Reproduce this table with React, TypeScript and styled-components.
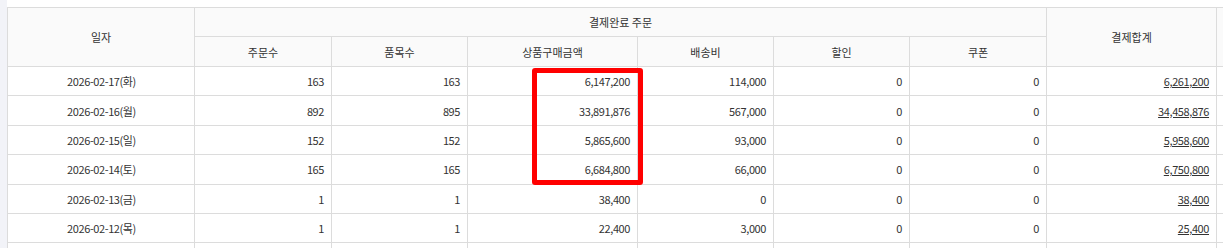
import React from "react";
import styled, { createGlobalStyle } from "styled-components";

const GlobalStyle = createGlobalStyle`
	html, body {
		margin: 0;
		padding: 0;
		background: #ffffff;
		overflow: hidden;
	}
	body {
		font-family: "Noto Sans CJK KR", "Noto Sans", sans-serif;
		font-size: 11px;
		color: #333333;
	}
`;

interface IRow {
	date: string;
	orders: number;
	items: number;
	amount: number;
	shipping: number;
	discount: number;
	coupon: number;
	total: number;
}

const rows: IRow[] = [
	{ date: "2026-02-17(화)", orders: 163, items: 163, amount: 6147200, shipping: 114000, discount: 0, coupon: 0, total: 6261200 },
	{ date: "2026-02-16(월)", orders: 892, items: 895, amount: 33891876, shipping: 567000, discount: 0, coupon: 0, total: 34458876 },
	{ date: "2026-02-15(일)", orders: 152, items: 152, amount: 5865600, shipping: 93000, discount: 0, coupon: 0, total: 5958600 },
	{ date: "2026-02-14(토)", orders: 165, items: 165, amount: 6684800, shipping: 66000, discount: 0, coupon: 0, total: 6750800 },
	{ date: "2026-02-13(금)", orders: 1, items: 1, amount: 38400, shipping: 0, discount: 0, coupon: 0, total: 38400 },
	{ date: "2026-02-12(목)", orders: 1, items: 1, amount: 22400, shipping: 3000, discount: 0, coupon: 0, total: 25400 },
];

const colWidths = [187, 137, 136, 170, 136, 136, 137, 170, 120];

const fmt = (n: number) => n.toLocaleString("en-US");

const App: React.FC = () => {
	return (
		<>
			<GlobalStyle />
			<Page>
				<SideStrip />
				<Content>
					<TableWrap>
						<Table>
							<colgroup>
								{colWidths.map((w, i) => (
									<col key={i} style={{ width: w }} />
								))}
							</colgroup>
							<thead>
								<HeadRow $h={29}>
									<Th rowSpan={2}>일자</Th>
									<Th colSpan={6}>결제완료 주문</Th>
									<Th rowSpan={2}>결제합계</Th>
									<Th rowSpan={2}></Th>
								</HeadRow>
								<HeadRow $h={30}>
									<Th>주문수</Th>
									<Th>품목수</Th>
									<Th>상품구매금액</Th>
									<Th>배송비</Th>
									<Th>할인</Th>
									<Th>쿠폰</Th>
								</HeadRow>
							</thead>
							<tbody>
								{rows.map((r, i) => (
									<BodyRow key={i}>
										<Td $center>{r.date}</Td>
										<Td>{fmt(r.orders)}</Td>
										<Td>{fmt(r.items)}</Td>
										<Td>{fmt(r.amount)}</Td>
										<Td>{fmt(r.shipping)}</Td>
										<Td>{fmt(r.discount)}</Td>
										<Td>{fmt(r.coupon)}</Td>
										<Td>
											<TotalLink>{fmt(r.total)}</TotalLink>
										</Td>
										<Td></Td>
									</BodyRow>
								))}
								<BodyRow>
									{colWidths.map((_, i) => (
										<Td key={i}></Td>
									))}
								</BodyRow>
							</tbody>
						</Table>
						<Highlight />
					</TableWrap>
				</Content>
			</Page>
		</>
	);
};

export default App;

const Page = styled.div`
	display: flex;
	width: 1223px;
	height: 248px;
	overflow: hidden;
`;

const SideStrip = styled.div`
	flex: 0 0 7px;
	background: #f2f3f8;
`;

const Content = styled.div`
	flex: 1;
	padding-top: 7px;
	overflow: hidden;
`;

const TableWrap = styled.div`
	position: relative;
	width: max-content;
`;

const Table = styled.table`
	table-layout: fixed;
	border-collapse: collapse;
	border-spacing: 0;
	width: 1329px;
	border-top: 1px solid #dcdcdc;
	border-left: 1px solid #dcdcdc;
`;

const HeadRow = styled.tr<{ $h: number }>`
	height: ${(p) => p.$h}px;
`;

const Th = styled.th`
	background: #fafafa;
	border: 1px solid #dcdcdc;
	font-weight: 400;
	color: #333333;
	text-align: center;
	padding: 0 8px;
	line-height: 14px;
`;

const BodyRow = styled.tr`
	height: 29.4px;
`;

const Td = styled.td<{ $center?: boolean }>`
	border: 1px solid #dcdcdc;
	padding: 0 7px 0 8px;
	text-align: ${(p) => (p.$center ? "center" : "right")};
	color: #333333;
	line-height: 14px;
	letter-spacing: -0.4px;
	white-space: nowrap;
`;

const TotalLink = styled.a`
	color: #333333;
	text-decoration: underline;
	cursor: pointer;
`;

const Highlight = styled.div`
	position: absolute;
	left: 525px;
	top: 61px;
	width: 101px;
	height: 107px;
	border: 5px solid #ff0000;
	border-radius: 3px;
	pointer-events: none;
`;
